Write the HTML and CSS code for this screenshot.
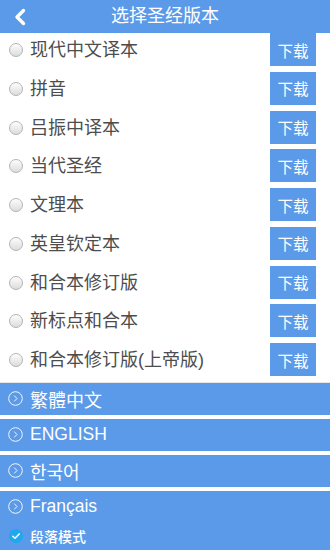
FILE: index.html
```html
<!DOCTYPE html>
<html lang="zh-CN">
<head>
    <meta charset="UTF-8">
    <meta name="viewport" content="width=device-width, initial-scale=1.0">
    <title>选择圣经版本</title>
    <link rel="stylesheet" href="styles.css">
</head>
<body>

    <!-- 顶部标题栏 -->
    <div class="topbar">
        <span class="back">
            <svg width="14" height="18" viewBox="0 0 14 18"><path d="M10.5 2.5 L4 9 L10.5 15.5" fill="none" stroke="#fff" stroke-width="3.4" stroke-linecap="round" stroke-linejoin="round"/></svg>
        </span>
        <h1 class="title">选择圣经版本</h1>
        <span></span>
    </div>

    <!-- 简体版本列表 -->
    <div class="version-list">
        <div class="version-row"><span class="radio"></span><span class="name">现代中文译本</span><button class="down-btn">下载</button></div>
        <div class="version-row"><span class="radio"></span><span class="name">拼音</span><button class="down-btn">下载</button></div>
        <div class="version-row"><span class="radio"></span><span class="name">吕振中译本</span><button class="down-btn">下载</button></div>
        <div class="version-row"><span class="radio"></span><span class="name">当代圣经</span><button class="down-btn">下载</button></div>
        <div class="version-row"><span class="radio"></span><span class="name">文理本</span><button class="down-btn">下载</button></div>
        <div class="version-row"><span class="radio"></span><span class="name">英皇钦定本</span><button class="down-btn">下载</button></div>
        <div class="version-row"><span class="radio"></span><span class="name">和合本修订版</span><button class="down-btn">下载</button></div>
        <div class="version-row"><span class="radio"></span><span class="name">新标点和合本</span><button class="down-btn">下载</button></div>
        <div class="version-row"><span class="radio"></span><span class="name">和合本修订版(上帝版)</span><button class="down-btn">下载</button></div>
    </div>

    <!-- 其他语言 -->
    <div class="lang-group">
        <div class="lang-row"><span class="arrow-icon"><svg width="15" height="15" viewBox="0 0 15 15"><circle cx="7.5" cy="7.5" r="6.8" fill="none" stroke="#fff" stroke-width="0.9"/><path d="M6.2 4.6 L9 7.5 L6.2 10.4" fill="none" stroke="#fff" stroke-width="0.9"/></svg></span>繁體中文</div>
        <div class="lang-row latin"><span class="arrow-icon"><svg width="15" height="15" viewBox="0 0 15 15"><circle cx="7.5" cy="7.5" r="6.8" fill="none" stroke="#fff" stroke-width="0.9"/><path d="M6.2 4.6 L9 7.5 L6.2 10.4" fill="none" stroke="#fff" stroke-width="0.9"/></svg></span>ENGLISH</div>
        <div class="lang-row korean"><span class="arrow-icon"><svg width="15" height="15" viewBox="0 0 15 15"><circle cx="7.5" cy="7.5" r="6.8" fill="none" stroke="#fff" stroke-width="0.9"/><path d="M6.2 4.6 L9 7.5 L6.2 10.4" fill="none" stroke="#fff" stroke-width="0.9"/></svg></span>한국어</div>
        <div class="lang-last">
            <div class="lang-row latin"><span class="arrow-icon"><svg width="15" height="15" viewBox="0 0 15 15"><circle cx="7.5" cy="7.5" r="6.8" fill="none" stroke="#fff" stroke-width="0.9"/><path d="M6.2 4.6 L9 7.5 L6.2 10.4" fill="none" stroke="#fff" stroke-width="0.9"/></svg></span>Français</div>
            <div class="mode-row">
                <span class="check"><svg width="14" height="14" viewBox="0 0 14 14"><circle cx="7" cy="7" r="7" fill="#1fa8ef"/><path d="M3.8 7.2 L6 9.3 L10.2 4.9" fill="none" stroke="#fff" stroke-width="1.5" stroke-linecap="round" stroke-linejoin="round"/></svg></span>
                段落模式
            </div>
        </div>
    </div>

</body>
</html>
```

FILE: styles.css
```css
      body {
          font-family: "Liberation Sans", "Noto Sans CJK SC", sans-serif;
          margin: 0;
          background: #fff;
          width: 330px;
          height: 550px;
          overflow: hidden;
      }
      /* 标题栏 */
      .topbar {
          height: 33px;
          background: #5b9ae8;
          display: grid;
          grid-template-columns: 40px 1fr 40px;
          align-items: center;
      }
      .back {
          display: flex;
          padding-left: 13px;
      }
      .title {
          margin: 0;
          color: #fff;
          font-size: 18px;
          font-weight: normal;
          text-align: center;
          line-height: 33px;
      }

      /* 版本列表 */
      .version-list {
          border-bottom: 1px solid #e6e6e6;
      }
      .version-row {
          height: 38.75px;
          display: flex;
          align-items: flex-start;
          padding: 0 14px 0 9px;
          box-sizing: border-box;
      }
      .radio {
          width: 12px;
          height: 12px;
          margin-top: 10px;
          border: 1px solid #b4b4b4;
          border-radius: 50%;
          background: linear-gradient(#fdfdfd, #dcdcdc);
          flex-shrink: 0;
      }
      .name {
          flex: 1;
          margin-left: 7px;
          color: #4d4d4d;
          font-size: 18px;
          line-height: 34px;
      }
      .down-btn {
          width: 46px;
          height: 33px;
          background: #5b9ae8;
          color: #fff;
          border: none;
          padding: 0;
          font-family: "Noto Sans CJK SC", sans-serif;
          font-size: 15.5px;
          cursor: pointer;
      }

      /* 语言分组 */
      .lang-row {
          height: 32px;
          background: #5b9ae8;
          color: #fff;
          font-size: 18px;
          display: flex;
          align-items: center;
          padding-left: 8px;
          margin-bottom: 4px;
      }
      .lang-row.latin {
          font-size: 17.5px;
      }
      .korean {
          font-family: "Noto Sans CJK KR", sans-serif;
      }
      .arrow-icon {
          display: flex;
          margin-right: 7px;
      }
      .lang-last {
          background: #5b9ae8;
          height: 60px;
      }
      .lang-last .lang-row {
          margin-bottom: 0;
      }
      .mode-row {
          display: flex;
          align-items: center;
          padding-left: 9px;
          height: 26px;
          color: #fff;
          font-size: 14px;
          font-weight: 500;
          font-family: "Noto Sans CJK SC", sans-serif;
      }
      .check {
          display: flex;
          margin-right: 7px;
      }
```
